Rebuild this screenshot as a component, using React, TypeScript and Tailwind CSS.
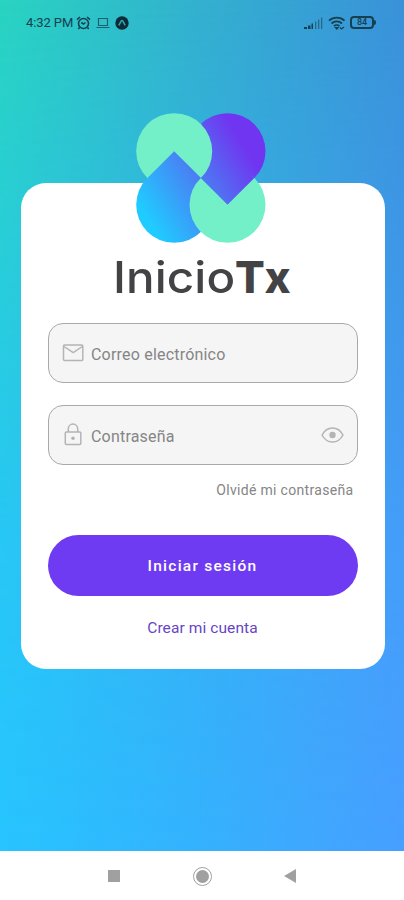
import React, { useState } from "react";

interface FieldProps {
  type: string;
  placeholder: string;
  icon: React.ReactNode;
  action?: React.ReactNode;
}

const Logo: React.FC = () => (
  <svg width="130" height="130" viewBox="0 0 130 130" className="block">
    <defs>
      <linearGradient
        id="drop"
        gradientUnits="userSpaceOnUse"
        x1="8"
        y1="100"
        x2="120"
        y2="32"
      >
        <stop offset="0" stopColor="#20cbff" />
        <stop offset="0.5" stopColor="#4b7cf3" />
        <stop offset="0.92" stopColor="#7035f0" />
      </linearGradient>
    </defs>
    <circle cx="91.5" cy="38.2" r="38" fill="url(#drop)" />
    <circle cx="38.2" cy="91.8" r="38" fill="url(#drop)" />
    <circle cx="38.2" cy="38.2" r="38" fill="#74f0c9" />
    <circle cx="91.5" cy="91.8" r="38" fill="#74f0c9" />
    <path d="M38.2 38.2 65 65 38.2 91.8 11.4 65Z" fill="url(#drop)" />
    <path d="M91.5 38.2 118.3 65 91.5 91.8 64.7 65Z" fill="url(#drop)" />
  </svg>
);

const MailIcon: React.FC = () => (
  <svg width="22" height="18" viewBox="0 0 22 18" fill="none" stroke="#b4b4b4" strokeWidth="1.5">
    <rect x="1.5" y="1" width="19.3" height="15.5" rx="1" />
    <path d="M2 2.5l9.2 6.2L20.3 2.5" />
  </svg>
);

const LockIcon: React.FC = () => (
  <svg width="22" height="24" viewBox="0 0 22 24" fill="none" stroke="#b4b4b4" strokeWidth="1.5">
    <rect x="3.3" y="9" width="15.5" height="12.5" rx="1" />
    <path d="M6.3 9V5.8a4.7 4.7 0 0 1 9.4 0V9" />
    <circle cx="11" cy="15.2" r="1.8" fill="#b4b4b4" stroke="none" />
  </svg>
);

const EyeIcon: React.FC = () => (
  <svg width="23" height="16" viewBox="0 0 23 16" fill="none" stroke="#b4b4b4" strokeWidth="1.5">
    <path d="M1 8C3.5 3.3 7 1 11.5 1S19.5 3.3 22 8c-2.5 4.7-6 7-10.5 7S3.5 12.7 1 8Z" />
    <circle cx="11.5" cy="8" r="3.2" fill="#b4b4b4" stroke="none" />
  </svg>
);

const Field: React.FC<FieldProps> = ({ type, placeholder, icon, action }) => (
  <label className="flex h-[60px] items-center rounded-[15px] border border-[#a9a9a9] bg-[#f5f5f5] pl-[13px] pr-[13px]">
    {icon}
    <input
      type={type}
      placeholder={placeholder}
      className="ml-[7.5px] min-w-0 flex-1 bg-transparent pt-[3px] text-base tracking-[0.2px] outline-none placeholder:text-[#858585]"
    />
    {action}
  </label>
);

const StatusBar: React.FC = () => (
  <div className="flex h-[45px] items-center justify-between pl-[26px] pr-[28px] text-[#15404f]">
    <div className="flex items-center">
      <span className="w-[50px] whitespace-nowrap pt-px text-[13px] tracking-[-0.1px]">4:32 PM</span>
      <svg width="15" height="14" viewBox="0 0 15 14" fill="none" stroke="currentColor" strokeWidth="1.6">
        <circle cx="7.5" cy="7.5" r="5" />
        <path d="M1 3.6 4 1M14 3.6 11 1M5.3 6.5l2.2 1.6 2-1.6M3.5 11.5 2.3 13M11.5 11.5l1.2 1.5" />
      </svg>
      <svg width="14" height="12" viewBox="0 0 14 12" className="ml-[5px]" fill="none" stroke="currentColor" strokeWidth="1.2" opacity="0.75">
        <path d="M2.5 1.5h9v7h-9zM0.5 10.5h13" />
      </svg>
      <svg width="14" height="14" viewBox="0 0 14 14" className="ml-[5px]">
        <circle cx="7" cy="7" r="6.7" fill="#0d2c38" />
        <path d="M3.8 9.4 6.3 4.9q.7-1 1.4 0l2.5 4.5" fill="none" stroke="#2ba7b4" strokeWidth="1.5" />
      </svg>
    </div>
    <div className="flex items-center">
      <svg width="19" height="12" viewBox="0 0 19 12" fill="currentColor">
        <path d="M0 10h3v2H0zM4 8.5h2.5V12H4zM7.5 6.5H9V12H7.5z" />
        <path d="M11 4.5h1.3V12H11zM14 2.5h1.3V12H14zM17 0.5h1.3V12H17z" opacity="0.55" />
      </svg>
      <svg width="18" height="14" viewBox="0 0 18 14" className="ml-[5px]" fill="none" stroke="currentColor" strokeWidth="1.8">
        <path d="M1 4.7a11.5 11.5 0 0 1 15.5 0M3.5 7.5a7.7 7.7 0 0 1 10.5 0M6 10.2a4 4 0 0 1 5.5 0" />
        <path d="M7.5 11.5l1.3 1.5 1.3-1.5ZM12 11.5l1.5 1.5 2.5-2" strokeWidth="1.2" />
      </svg>
      <div className="ml-1 flex h-[13px] w-6 items-center justify-center rounded-[4px] border-2 border-current text-[9px] font-medium leading-none">
        84
      </div>
      <div className="h-[5px] w-[2px] rounded-r bg-current" />
    </div>
  </div>
);

const App: React.FC = () => {
  const [showPassword, setShowPassword] = useState<boolean>(false);

  return (
    <div className="flex h-[900px] w-[404px] flex-col overflow-hidden bg-white font-['Roboto',sans-serif]">
      <div className="grid h-[851px] grid-cols-1 grid-rows-1">
        {/* the two gradients are mixed from top to bottom by the mask */}
        <div className="col-start-1 row-start-1 bg-[linear-gradient(90deg,#29d4c1,#33b0cf_50%,#3a92d9)]" />
        <div className="col-start-1 row-start-1 bg-[linear-gradient(90deg,#27c4ff,#35b1fd_50%,#479fff)] [mask-image:linear-gradient(180deg,transparent,rgba(0,0,0,.45)_35%,rgba(0,0,0,.85)_65%,black)]" />
        <div className="z-10 col-start-1 row-start-1 flex flex-col">
          <StatusBar />
          <main className="ml-[20.5px] mt-[137.5px] flex h-[486.5px] w-[364px] flex-col rounded-[25px] bg-white px-[27px]">
            <div className="mt-[-70px] pl-[88.5px]">
              <Logo />
            </div>
            <h1 className="mt-[8px] flex h-[52px] items-center whitespace-nowrap pl-[65px] font-['Inter',sans-serif] text-[44px] leading-none text-[#434345]">
              <span className="w-[122.5px] origin-left scale-x-[1.08] font-medium tracking-[0.1px]">
                Inicio
              </span>
              <span className="font-extrabold tracking-[0.5px]">Tx</span>
            </h1>
            <div className="mt-[20.5px] flex flex-col gap-[22px]">
              <Field type="email" placeholder="Correo electrónico" icon={<MailIcon />} />
              <Field
                type={showPassword ? "text" : "password"}
                placeholder="Contraseña"
                icon={<LockIcon />}
                action={
                  <button type="button" onClick={() => setShowPassword(!showPassword)}>
                    <EyeIcon />
                  </button>
                }
              />
            </div>
            <a href="#" className="mr-1 mt-[15px] self-end text-sm leading-5 tracking-[0.32px] text-[#858585]">
              Olvidé mi contraseña
            </a>
            <button className="mt-[35px] h-[61px] shrink-0 rounded-full bg-[#6f3bf2] pt-0.5 text-[15.5px] font-medium tracking-[1.25px] text-white">
              Iniciar sesión
            </button>
            <a href="#" className="mt-5 self-center text-[15.5px] leading-6 tracking-[0.1px] text-[#6745c4]">
              Crear mi cuenta
            </a>
          </main>
        </div>
      </div>
      <nav className="flex h-[49px] items-center pl-[108px] pt-px">
        <div className="h-3 w-3 bg-[#a0a0a0]" />
        <div className="ml-[73px] flex h-[19px] w-[19px] items-center justify-center rounded-full border-[1.5px] border-[#a0a0a0]">
          <div className="h-[13px] w-[13px] rounded-full bg-[#a0a0a0]" />
        </div>
        <svg width="12" height="14" viewBox="0 0 12 14" className="ml-[72px]">
          <path d="M12 0v14L0 7Z" fill="#a0a0a0" />
        </svg>
      </nav>
    </div>
  );
};

export default App;
